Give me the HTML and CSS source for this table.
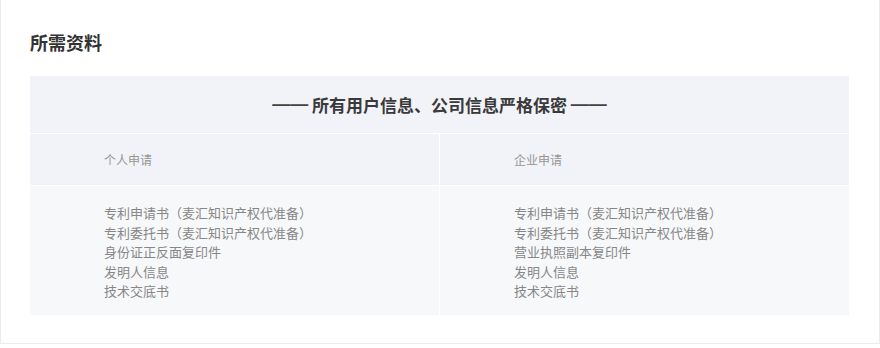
FILE: index.html
```html
<!DOCTYPE html>
<html lang="zh-CN">
<head>
<meta charset="utf-8">
<title>所需资料</title>
<link rel="stylesheet" href="styles.css">
</head>
<body>
<div class="panel">
  <h2 class="title">所需资料</h2>
  <div class="table">
    <div class="notice"><span class="dash">——</span> 所有用户信息、公司信息严格保密 <span class="dash">——</span></div>
    <div class="row head">
      <div class="cell">个人申请</div>
      <div class="cell">企业申请</div>
    </div>
    <div class="row body">
      <ul class="cell list">
        <li>专利申请书（麦汇知识产权代准备）</li>
        <li>专利委托书（麦汇知识产权代准备）</li>
        <li>身份证正反面复印件</li>
        <li>发明人信息</li>
        <li>技术交底书</li>
      </ul>
      <ul class="cell list">
        <li>专利申请书（麦汇知识产权代准备）</li>
        <li>专利委托书（麦汇知识产权代准备）</li>
        <li>营业执照副本复印件</li>
        <li>发明人信息</li>
        <li>技术交底书</li>
      </ul>
    </div>
  </div>
</div>
</body>
</html>
```

FILE: styles.css
```css
* { box-sizing: border-box; }
html, body {
  margin: 0;
  padding: 0;
  background: #ffffff;
}
body {
  font-family: "Noto Sans CJK SC", "Noto Sans", sans-serif;
  width: 880px;
  height: 348px;
}
.panel {
  width: 880px;
  border: 1px solid #ececec;
  border-top: 0;
  background: #ffffff;
  padding: 30px 30px 28px 29px;
}
.title {
  margin: 0;
  font-size: 18px;
  line-height: 24px;
  font-weight: bold;
  color: #333333;
}
.table {
  margin-top: 22px;
  background: #ffffff;
}
.notice {
  height: 57px;
  background: #f2f3f8;
  display: flex;
  align-items: center;
  justify-content: center;
  font-size: 17px;
  font-weight: bold;
  color: #3a3a3a;
  margin-bottom: 1px;
  white-space: pre;
}
.dash {
  font-family: "Liberation Sans", sans-serif;
  font-size: 18px;
  font-weight: bold;
  color: #444444;
  letter-spacing: 0;
}
.row {
  display: grid;
  grid-template-columns: 1fr 1fr;
  column-gap: 1px;
}
.head .cell {
  height: 51px;
  background: #f2f3f8;
  display: flex;
  align-items: center;
  padding-left: 74px;
  font-size: 12px;
  color: #969696;
}
.head { margin-bottom: 1px; }
.list {
  margin: 0;
  list-style: none;
  background: #f7f8fa;
  padding: 17px 0 14px 74px;
  font-size: 13px;
  line-height: 19.5px;
  color: #878787;
}
.list li { margin: 0; padding: 0; }
```
